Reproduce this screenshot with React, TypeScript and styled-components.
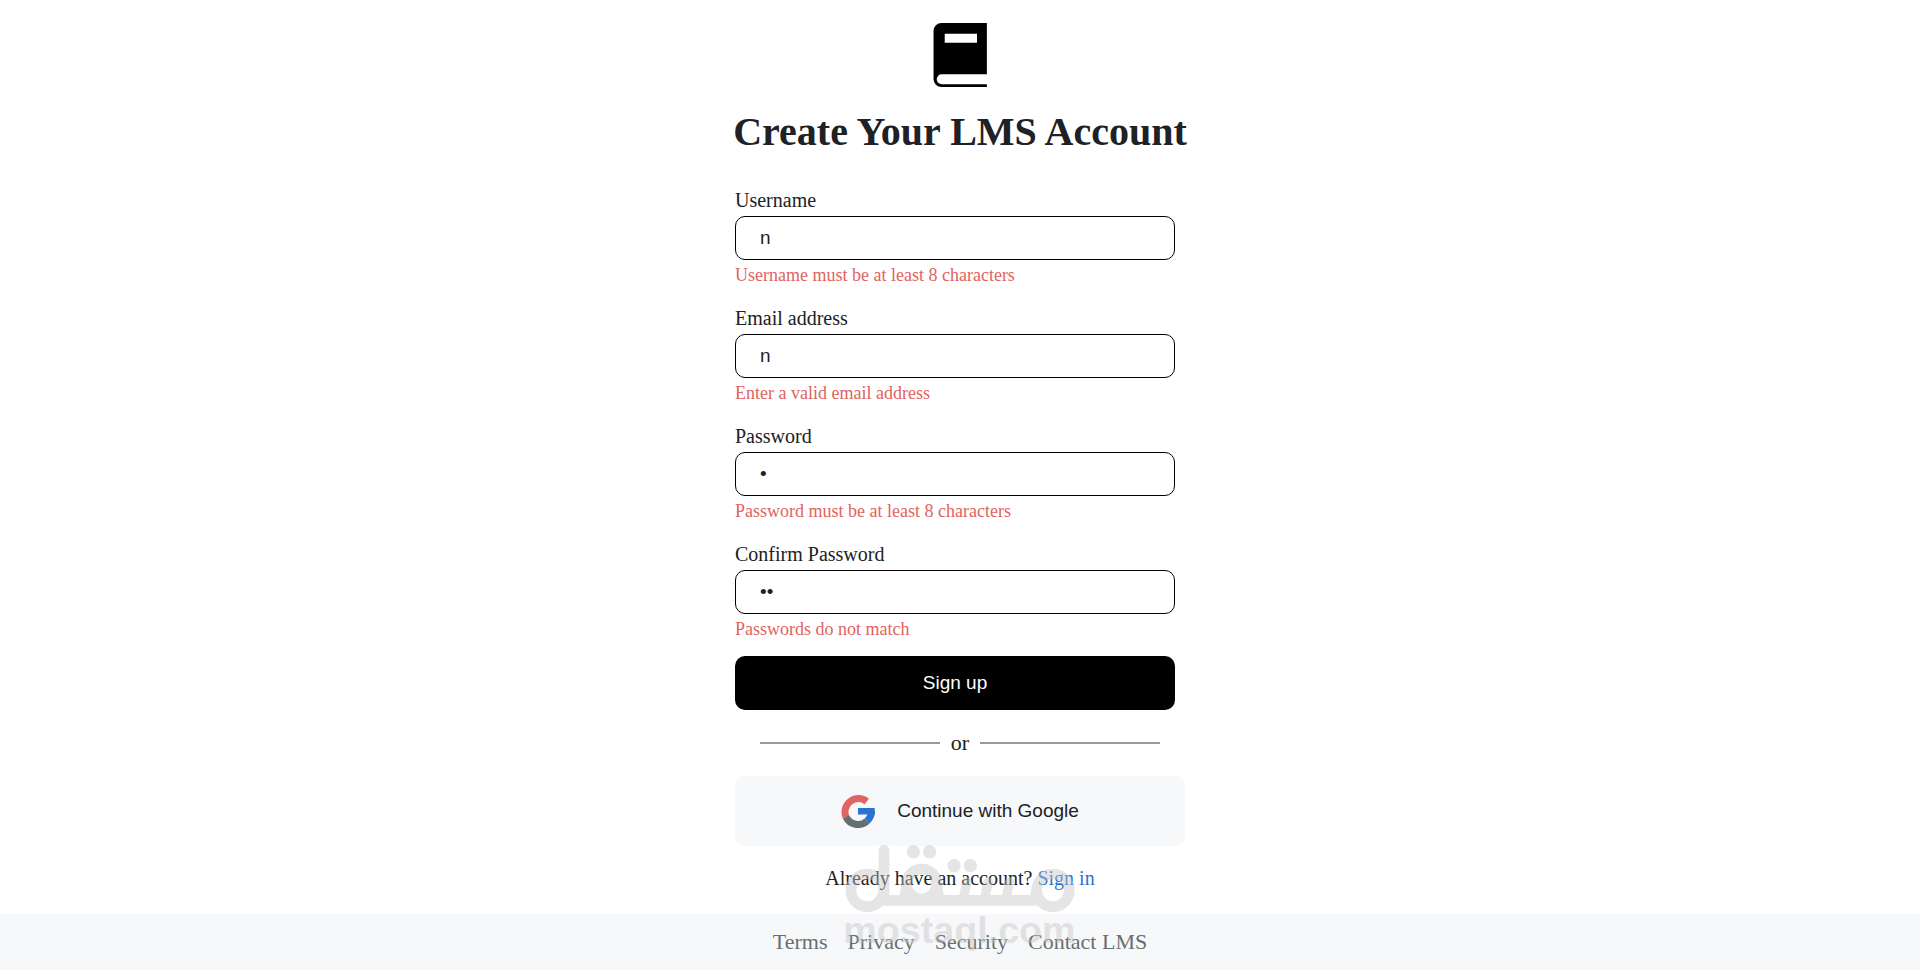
import React from 'react';
import styled, { createGlobalStyle } from 'styled-components';

const serif = '"Liberation Serif", "Times New Roman", serif';
const sans = '"Liberation Sans", Arial, sans-serif';

const GlobalStyle = createGlobalStyle`
  *, *::before, *::after { box-sizing: border-box; }
  body { margin: 0; background: #fff; color: #202124; font-family: ${serif}; }
`;

const Page = styled.div`
  display: flex;
  flex-direction: column;
  min-height: 100vh;
  position: relative;
`;

const Main = styled.main`
  flex: 1;
  display: flex;
  flex-direction: column;
  align-items: center;
  padding: 23px 16px 0;
`;

const Title = styled.h1`
  margin: 21px 0 32px;
  font-size: 40px;
  line-height: 48px;
  font-weight: 700;
  text-align: center;
`;

const Panel = styled.div`
  width: 100%;
  max-width: 450px;
`;

const Form = styled.form`
  display: flex;
  flex-direction: column;
  gap: 16px;
  padding-right: 10px;
`;

const Fields = styled.div`
  display: flex;
  flex-direction: column;
  gap: 20px;
`;

const Field = styled.div`
  display: flex;
  flex-direction: column;
`;

const Label = styled.label`
  font-size: 20px;
  line-height: 24px;
  margin-bottom: 4px;
`;

const Input = styled.input`
  width: 100%;
  height: 44px;
  padding: 0 24px;
  border: 1px solid #000;
  border-radius: 10px;
  background: #fff;
  color: #202124;
  font-family: ${sans};
  font-size: 19px;
  outline: none;
`;

const ErrorText = styled.span`
  margin-top: 4px;
  font-size: 18px;
  line-height: 22px;
  color: #e06461;
`;

const SubmitButton = styled.button`
  height: 54px;
  border: 0;
  border-radius: 10px;
  background: #000;
  color: #fff;
  font-family: ${sans};
  font-size: 19px;
  cursor: pointer;
`;

const Divider = styled.div`
  display: flex;
  align-items: center;
  justify-content: center;
  margin: 20px 0;
  padding: 0 25px;
  font-size: 22px;
  line-height: 26px;
`;

const Rule = styled.span`
  flex: 1;
  height: 2px;
  background: #9b9b9b;
`;

const DividerWord = styled.span`
  width: 40px;
  text-align: center;
`;

const GoogleButton = styled.button`
  display: flex;
  align-items: center;
  justify-content: center;
  gap: 22px;
  width: 100%;
  height: 70px;
  padding: 0;
  border: 0;
  border-radius: 10px;
  background: #f7f8fa;
  color: #202124;
  font-family: ${sans};
  font-size: 19px;
  cursor: pointer;
`;

const SignIn = styled.p`
  margin: 20px 0 0;
  font-size: 20px;
  line-height: 24px;
  text-align: center;
`;

const SignInLink = styled.a`
  color: #2874d0;
  text-decoration: none;
`;

const Footer = styled.footer`
  display: flex;
  align-items: center;
  justify-content: center;
  gap: 20px;
  height: 56px;
  background: #f7f8fa;
`;

const FooterLink = styled.a`
  color: #65706e;
  font-size: 22px;
  line-height: 26px;
  text-decoration: none;
`;

const Watermark = styled.svg`
  position: absolute;
  left: 50%;
  bottom: 18px;
  transform: translateX(-50%);
  pointer-events: none;
`;

const BookIcon = () => (
  <svg width="54" height="64" viewBox="0 0 20.25 24" aria-hidden="true">
    <path
      fillRule="evenodd"
      d="M3.2 0H20.2V19.2H3.3a1.9 1.9 0 0 0 0 3.8H20.2V24H3.2a3 3 0 0 1-3-3V3a3 3 0 0 1 3-3ZM4.4 4V7.4H16.5V4Z"
    />
  </svg>
);

const GoogleIcon = () => (
  <svg width="34" height="34" viewBox="0 0 34 34" aria-hidden="true">
    <g fill="none" strokeWidth="7">
      <path stroke="#e06461" d="M25.8 7.4A13.5 13.5 0 0 0 4.9 22.9" />
      <path stroke="#65706e" d="M4.9 22.9A13.5 13.5 0 0 0 26 27.1" />
      <path stroke="#2874d0" d="M26 27.1A13.5 13.5 0 0 0 30.5 17" />
    </g>
    <path fill="#2874d0" d="M17 14H33.7V20.5H17Z" />
  </svg>
);

const MostaqlMark = () => (
  <Watermark width="232" height="108" viewBox="42 28 696 324" aria-label="mostaql.com">
    <g opacity="0.44" fill="#c6c6c6" stroke="#c6c6c6">
      <g fill="none" strokeWidth="32" strokeLinecap="round">
        <circle cx="112" cy="167" r="49" />
        <path d="M162 47V190" />
        <path d="M150 197H620" />
        <circle cx="275" cy="148" r="45" />
        <circle cx="669" cy="167" r="49" />
        <path strokeWidth="28" d="M400 190L411 142M464 190L475 142M528 190L539 142" />
      </g>
      <g stroke="none">
        <path d="M213 150Q214 181 200 190H350Q336 181 337 150L275 194ZM604 165Q604 181 590 190H630Z" />
        <circle cx="250" cy="51" r="20" />
        <circle cx="299" cy="51" r="20" />
        <circle cx="372" cy="93" r="20" />
        <circle cx="421" cy="93" r="20" />
        <text x="40" y="325" fontFamily="Liberation Sans, Arial, sans-serif" fontWeight="700" fontSize="113">mostaql.com</text>
      </g>
    </g>
  </Watermark>
);

const fields = [
  { id: 'username', label: 'Username', type: 'text', value: 'n', error: 'Username must be at least 8 characters' },
  { id: 'email', label: 'Email address', type: 'text', value: 'n', error: 'Enter a valid email address' },
  { id: 'password', label: 'Password', type: 'password', value: 'n', error: 'Password must be at least 8 characters' },
  { id: 'confirm', label: 'Confirm Password', type: 'password', value: 'nn', error: 'Passwords do not match' },
];

export default function App() {
  return (
    <Page>
      <GlobalStyle />
      <Main>
        <BookIcon />
        <Title>Create Your LMS Account</Title>
        <Panel>
          <Form onSubmit={(e) => e.preventDefault()}>
            <Fields>
              {fields.map((f) => (
                <Field key={f.id}>
                  <Label htmlFor={f.id}>{f.label}</Label>
                  <Input id={f.id} type={f.type} defaultValue={f.value} aria-describedby={f.id + '-error'} />
                  <ErrorText id={f.id + '-error'}>{f.error}</ErrorText>
                </Field>
              ))}
            </Fields>
            <SubmitButton type="submit">Sign up</SubmitButton>
          </Form>
          <Divider>
            <Rule />
            <DividerWord>or</DividerWord>
            <Rule />
          </Divider>
          <GoogleButton type="button">
            <GoogleIcon />
            Continue with Google
          </GoogleButton>
          <SignIn>
            Already have an account? <SignInLink href="#signin">Sign in</SignInLink>
          </SignIn>
        </Panel>
      </Main>
      <Footer>
        <FooterLink href="#terms">Terms</FooterLink>
        <FooterLink href="#privacy">Privacy</FooterLink>
        <FooterLink href="#security">Security</FooterLink>
        <FooterLink href="#contact">Contact LMS</FooterLink>
      </Footer>
      <MostaqlMark />
    </Page>
  );
}
